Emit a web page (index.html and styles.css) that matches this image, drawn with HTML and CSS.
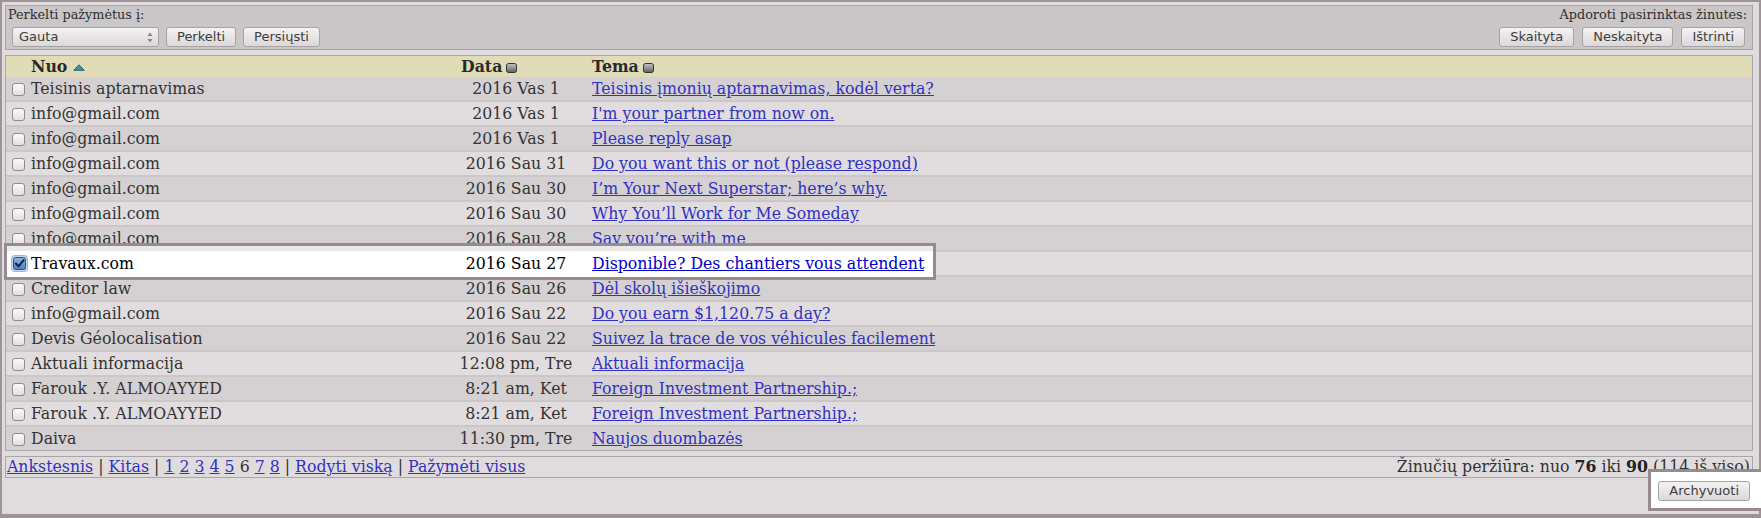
FILE: index.html
```html
<!DOCTYPE html>
<html lang="lt">
<head>
<meta charset="utf-8">
<title>Gauta</title>
<link rel="stylesheet" href="styles.css">
</head>
<body>
<div class="frame">
  <div class="toolbar">
    <div class="tb-left">
      <div class="tb-label">Perkelti pažymėtus į:</div>
      <div class="btnrow btnrow-left">
        <span class="select">Gauta<svg class="spin" width="6" height="11" viewBox="0 0 6 11"><path d="M3 0.5 L5.5 4 L0.5 4 Z" fill="#8a8688"/><path d="M3 10.5 L5.5 7 L0.5 7 Z" fill="#8a8688"/></svg></span>
        <span class="btn">Perkelti</span>
        <span class="btn">Persiųsti</span>
      </div>
    </div>
    <div class="tb-right">
      <div class="tb-label">Apdoroti pasirinktas žinutes:</div>
      <div class="btnrow btnrow-right">
        <span class="btn">Skaityta</span>
        <span class="btn">Neskaityta</span>
        <span class="btn">Ištrinti</span>
      </div>
    </div>
  </div>

  <div class="msglist">
    <div class="hdr">
      <span></span>
      <span class="h-nuo">Nuo <svg class="sort-tri" width="12" height="7" viewBox="0 0 12 7"><path d="M6 0.8 L11.2 6.3 L0.8 6.3 Z" fill="#3d93a6" stroke="#1f5563" stroke-width="0.9"/></svg></span>
      <span class="h-data">Data <svg class="sort-sq" width="11" height="10" viewBox="0 0 11 10"><defs><linearGradient id="sq" x1="0" y1="0" x2="0" y2="1"><stop offset="0" stop-color="#c4c4c4"/><stop offset="1" stop-color="#5e5e5e"/></linearGradient></defs><rect x="0.5" y="0.5" width="10" height="9" rx="2" fill="url(#sq)" stroke="#333"/></svg></span>
      <span class="h-tema">Tema <svg class="sort-sq" width="11" height="10" viewBox="0 0 11 10"><rect x="0.5" y="0.5" width="10" height="9" rx="2" fill="url(#sq)" stroke="#333"/></svg></span>
    </div>
    <div class="rows">
      <div class="row"><span class="cb"><i class="box"></i></span><span class="from">Teisinis aptarnavimas</span><span class="date">2016 Vas 1</span><span class="subj"><a href="#">Teisinis įmonių aptarnavimas, kodėl verta?</a></span></div>
      <div class="row"><span class="cb"><i class="box"></i></span><span class="from">info@gmail.com</span><span class="date">2016 Vas 1</span><span class="subj"><a href="#">I'm your partner from now on.</a></span></div>
      <div class="row"><span class="cb"><i class="box"></i></span><span class="from">info@gmail.com</span><span class="date">2016 Vas 1</span><span class="subj"><a href="#">Please reply asap</a></span></div>
      <div class="row"><span class="cb"><i class="box"></i></span><span class="from">info@gmail.com</span><span class="date">2016 Sau 31</span><span class="subj"><a href="#">Do you want this or not (please respond)</a></span></div>
      <div class="row"><span class="cb"><i class="box"></i></span><span class="from">info@gmail.com</span><span class="date">2016 Sau 30</span><span class="subj"><a href="#">I’m Your Next Superstar; here’s why.</a></span></div>
      <div class="row"><span class="cb"><i class="box"></i></span><span class="from">info@gmail.com</span><span class="date">2016 Sau 30</span><span class="subj"><a href="#">Why You’ll Work for Me Someday</a></span></div>
      <div class="row"><span class="cb"><i class="box"></i></span><span class="from">info@gmail.com</span><span class="date">2016 Sau 28</span><span class="subj"><a href="#">Say you’re with me</a></span></div>
      <div class="row row-sel"><span class="cb"><svg class="checked" width="17" height="17" viewBox="0 0 17 17"><defs><linearGradient id="cbg" x1="0" y1="0" x2="0" y2="1"><stop offset="0" stop-color="#8fb4e6"/><stop offset="1" stop-color="#4f7fc2"/></linearGradient></defs><rect x="0.5" y="0.5" width="16" height="16" rx="3" fill="#c5d5ea" stroke="#9fb5d3"/><rect x="2.5" y="2.5" width="12" height="12" rx="2" fill="url(#cbg)" stroke="#2f5286"/><path d="M4.8 8.6 L7.6 11.3 L12.6 5.2" stroke="#16264a" stroke-width="2.1" fill="none" stroke-linecap="round" stroke-linejoin="round"/></svg></span><span class="from">Travaux.com</span><span class="date">2016 Sau 27</span><span class="subj"><a href="#">Disponible? Des chantiers vous attendent</a></span></div>
      <div class="row"><span class="cb"><i class="box"></i></span><span class="from">Creditor law</span><span class="date">2016 Sau 26</span><span class="subj"><a href="#">Dėl skolų išieškojimo</a></span></div>
      <div class="row"><span class="cb"><i class="box"></i></span><span class="from">info@gmail.com</span><span class="date">2016 Sau 22</span><span class="subj"><a href="#">Do you earn $1,120.75 a day?</a></span></div>
      <div class="row"><span class="cb"><i class="box"></i></span><span class="from">Devis Géolocalisation</span><span class="date">2016 Sau 22</span><span class="subj"><a href="#">Suivez la trace de vos véhicules facilement</a></span></div>
      <div class="row"><span class="cb"><i class="box"></i></span><span class="from">Aktuali informacija</span><span class="date">12:08 pm, Tre</span><span class="subj"><a href="#">Aktuali informacija</a></span></div>
      <div class="row"><span class="cb"><i class="box"></i></span><span class="from">Farouk .Y. ALMOAYYED</span><span class="date">8:21 am, Ket</span><span class="subj"><a href="#">Foreign Investment Partnership.;</a></span></div>
      <div class="row"><span class="cb"><i class="box"></i></span><span class="from">Farouk .Y. ALMOAYYED</span><span class="date">8:21 am, Ket</span><span class="subj"><a href="#">Foreign Investment Partnership.;</a></span></div>
      <div class="row"><span class="cb"><i class="box"></i></span><span class="from">Daiva</span><span class="date">11:30 pm, Tre</span><span class="subj"><a href="#">Naujos duombazės</a></span></div>
    </div>
  </div>

  <div class="pager">
    <div class="pages"><a href="#">Ankstesnis</a> | <a href="#">Kitas</a> | <a href="#">1</a> <a href="#">2</a> <a href="#">3</a> <a href="#">4</a> <a href="#">5</a> 6 <a href="#">7</a> <a href="#">8</a> | <a href="#">Rodyti viską</a> | <a href="#">Pažymėti visus</a></div>
    <div class="count">Žinučių peržiūra: nuo <b>76</b> iki <b>90</b> (114 iš viso)</div>
  </div>

  <div class="foot">
    <div class="archwrap"><span class="btn">Archyvuoti</span></div>
  </div>
</div>
</body>
</html>
```

FILE: styles.css
```css
html, body {
  margin: 0;
  padding: 0;
  height: 100%;
  overflow: hidden;
}

body {
  font-family: "DejaVu Serif", serif;
  background: #e0dcdd;
  color: #333;
}

.frame {
  box-sizing: border-box;
  height: 518px;
  border: 2px solid #9e9397;
  border-bottom-width: 4px;
  padding: 3px 6px 0 3px;
}

/* toolbar */
.toolbar {
  display: flex;
  justify-content: space-between;
  border: 1px solid #a8a3a6;
  background: #cbc6c8;
  padding: 1px 5px 2px 2px;
}

.tb-left, .tb-right {
  display: flex;
  flex-direction: column;
}

.tb-right {
  align-items: flex-end;
}

.tb-label {
  font-size: 12.8px;
  line-height: 16px;
  color: #2e2e2e;
}

.btnrow {
  display: flex;
  gap: 7px;
  margin-top: 4px;
}

.btnrow-left {
  padding-left: 4px;
}

.btnrow-right {
  gap: 8px;
  margin-right: 2px;
}

.btn, .select {
  box-sizing: border-box;
  height: 20px;
  line-height: 18px;
  font-family: "DejaVu Sans", sans-serif;
  font-size: 13px;
  color: #3c3c3c;
  border: 1px solid #a7a2a5;
  border-radius: 3px;
  background: linear-gradient(#f4f2f3, #dbd8d9);
  padding: 0 10px;
  white-space: nowrap;
}

.select {
  width: 147px;
  padding: 0 5px 0 6px;
  display: flex;
  align-items: center;
  justify-content: space-between;
}

.spin {
  display: block;
}

/* message list */
.msglist {
  margin-top: 5px;
  border: 1px solid #aaa5a8;
}

.hdr, .row {
  display: grid;
  grid-template-columns: 25px 425px 120px 1fr;
  white-space: nowrap;
}

.hdr {
  height: 21px;
  line-height: 21px;
  background: #e0dcb8;
  font-size: 15.75px;
  font-weight: bold;
  color: #2a2a2a;
}

.hdr span {
  display: flex;
  align-items: center;
}

.h-nuo svg {
  margin-left: 6px;
  margin-top: 1px;
}

.h-data {
  padding-left: 5px;
}

.h-tema {
  padding-left: 16px;
}

.h-data svg, .h-tema svg {
  margin-left: 4px;
  margin-top: 2px;
}

.row {
  height: 23px;
  line-height: 23px;
  font-size: 15.75px;
  color: #333;
  background: #d5d1d2;
}

.row + .row {
  border-top: 2px solid #cbc7c9;
}

.row:nth-child(even) {
  background: #e1dddf;
}

.cb {
  display: flex;
  align-items: center;
  justify-content: center;
}

.box {
  display: block;
  box-sizing: border-box;
  width: 13px;
  height: 13px;
  border: 1px solid #8f8b8d;
  border-radius: 3px;
  background: linear-gradient(#fbfafa, #e2dfe0);
  margin-top: 2px;
}

.checked {
  display: block;
  margin-left: 2px;
}

.date {
  text-align: center;
}

.subj {
  padding-left: 16px;
}

a {
  color: #3131c2;
  text-decoration: underline;
}

/* highlighted row */
.row-sel {
  position: relative;
  z-index: 1;
  color: #000;
}

.row-sel::before {
  content: "";
  position: absolute;
  z-index: -1;
  left: -2px;
  top: -9px;
  bottom: -5px;
  width: 932px;
  box-sizing: border-box;
  border: 3px solid #978b90;
  background: linear-gradient(#e9e9e9 0 5px, #ffffff 5px);
}

.row-sel a {
  color: #0000cc;
}

/* pager */
.pager {
  margin-top: 5px;
  border: 1px solid #aaa5a8;
  display: flex;
  justify-content: space-between;
  height: 20px;
  line-height: 20px;
  font-size: 15.75px;
  padding: 0 2px 0 1px;
  color: #333;
  white-space: nowrap;
}

.count b {
  color: #222;
}

/* footer */
.foot {
  display: flex;
  justify-content: flex-end;
  margin-top: 3px;
  padding-right: 3px;
}

.archwrap {
  position: relative;
  z-index: 1;
  display: flex;
}

.archwrap::before {
  content: "";
  position: absolute;
  z-index: -1;
  left: -10px;
  top: -12px;
  bottom: -10px;
  right: -30px;
  border: 3px solid #978b90;
  background: #ffffff;
}
```
